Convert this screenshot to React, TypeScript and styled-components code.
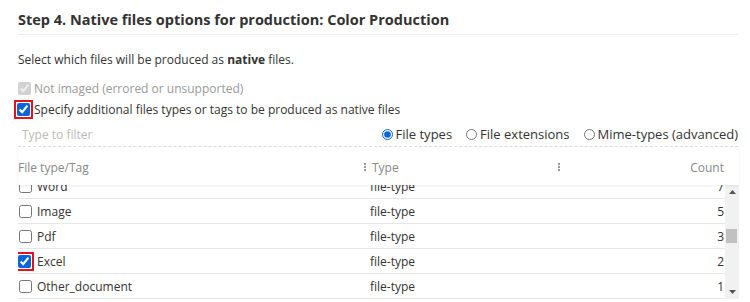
import { useLayoutEffect, useRef } from 'react';
import styled, { createGlobalStyle } from 'styled-components';

interface FileTypeRow {
  name: string;
  kind: string;
  count: number;
  checked?: boolean;
}

const rows: FileTypeRow[] = [
  { name: 'Email', kind: 'file-type', count: 14 },
  { name: 'Presentation', kind: 'file-type', count: 9 },
  { name: 'Word', kind: 'file-type', count: 7 },
  { name: 'Image', kind: 'file-type', count: 5 },
  { name: 'Pdf', kind: 'file-type', count: 3 },
  { name: 'Excel', kind: 'file-type', count: 2, checked: true },
  { name: 'Other_document', kind: 'file-type', count: 1 },
];

const ROW_HEIGHT = 25;
const SCROLL_TOP = 2 * ROW_HEIGHT + 11;

const GlobalStyle = createGlobalStyle`
  html, body {
    margin: 0;
    padding: 0;
    background: #fff;
  }
  body {
    font-family: "Open Sans", "Noto Sans", Arial, sans-serif;
    font-size: 12px;
    color: #333;
  }
`;

const Page = styled.div`
  width: 750px;
  padding: 0 12px 0 18px;
  box-sizing: border-box;
`;

const Title = styled.h2`
  margin: 0;
  padding: 10px 0 5px;
  font-size: 14.5px;
  line-height: 19px;
  font-weight: 700;
  color: #333;
  border-bottom: 1px solid #eee;
`;

const Description = styled.p`
  margin: 16px 0 0;
  line-height: 18px;
`;

const CheckLine = styled.label<{ $disabled?: boolean }>`
  display: flex;
  align-items: center;
  gap: 3px;
  height: 20px;
  color: ${p => (p.$disabled ? '#999' : '#333')};
`;

const CheckBox = styled.input.attrs({ type: 'checkbox' })`
  width: 13px;
  height: 13px;
  margin: 0;
  accent-color: #0a66d8;
  flex: none;
`;

const Marked = styled.span`
  display: inline-flex;
  border: 2px solid #e0141e;
  padding: 1px;
  margin: -3px -2px -3px -4px;
`;

const Options = styled.div`
  margin-top: 9px;
  display: flex;
  flex-direction: column;
  gap: 1px;
`;

const FilterBar = styled.div`
  display: flex;
  align-items: center;
  height: 24px;
  margin-top: 3px;
  border-bottom: 1px dashed #ddd;
`;

const FilterInput = styled.input`
  flex: 1;
  min-width: 0;
  border: none;
  outline: none;
  padding: 0 0 0 4px;
  height: 20px;
  font: inherit;
  color: #333;
  background: transparent;
  &::placeholder {
    color: #bbb;
  }
`;

const RadioGroup = styled.div`
  display: flex;
  align-items: center;
  gap: 14px;
  font-size: 13px;
`;

const RadioLabel = styled.label`
  display: flex;
  align-items: center;
  gap: 3px;
  color: #333;
`;

const Radio = styled.input.attrs({ type: 'radio' })`
  width: 11px;
  height: 11px;
  margin: 0;
  accent-color: #0a66d8;
`;

const Grid = styled.div`
  margin-right: -1px;
`;

const HeaderRow = styled.div`
  display: grid;
  grid-template-columns: 346px 194px 1fr 15px;
  align-items: center;
  height: 38px;
  box-sizing: border-box;
  padding-top: 2px;
  color: #888;
  position: relative;
  box-shadow: 0 1px 2px rgba(0, 0, 0, 0.08);
  z-index: 1;
`;

const HeaderCell = styled.div<{ $right?: boolean }>`
  display: flex;
  align-items: center;
  justify-content: ${p => (p.$right ? 'flex-end' : 'flex-start')};
  gap: 4px;
`;

const Grip = styled.span`
  display: inline-flex;
  flex-direction: column;
  gap: 1px;
  margin-right: 2px;
  & > i {
    width: 2px;
    height: 2px;
    background: #999;
  }
`;

const Spacer = styled.span`
  flex: 1;
  display: flex;
`;

const Body = styled.div`
  display: flex;
  height: 114px;
`;

const Scroller = styled.div`
  flex: 1;
  overflow-y: auto;
  scrollbar-width: none;
  &::-webkit-scrollbar {
    display: none;
  }
`;

const Row = styled.div`
  display: grid;
  grid-template-columns: 352px 188px 1fr;
  align-items: center;
  height: ${ROW_HEIGHT}px;
  box-sizing: border-box;
  border-bottom: 1px solid #e6e6e6;
`;

const NameCell = styled.label`
  display: flex;
  align-items: center;
  gap: 5px;
  padding-left: 1px;
`;

const CountCell = styled.div`
  text-align: right;
  padding-right: 1px;
`;

const ScrollTrack = styled.div`
  width: 14px;
  background: #f1f1f1;
  display: flex;
  flex-direction: column;
  align-items: center;
`;

const ScrollArrow = styled.div`
  height: 14px;
  display: flex;
  align-items: center;
  justify-content: center;
`;

const ThumbArea = styled.div`
  flex: 1;
  width: 100%;
  position: relative;
`;

const Thumb = styled.div`
  position: absolute;
  left: 1px;
  right: 2px;
  height: 14px;
  background: #c1c1c1;
`;

function Dots() {
  return (
    <Grip>
      <i />
      <i />
      <i />
    </Grip>
  );
}

export default function App() {
  const scrollRef = useRef<HTMLDivElement>(null);

  useLayoutEffect(() => {
    if (scrollRef.current) scrollRef.current.scrollTop = SCROLL_TOP;
  }, []);

  return (
    <Page>
      <GlobalStyle />
      <Title>Step 4. Native files options for production: Color Production</Title>
      <Description>
        Select which files will be produced as <b>native</b> files.
      </Description>

      <Options>
        <CheckLine $disabled>
          <CheckBox checked disabled readOnly />
          Not imaged (errored or unsupported)
        </CheckLine>
        <CheckLine>
          <Marked>
            <CheckBox defaultChecked />
          </Marked>
          Specify additional files types or tags to be produced as native files
        </CheckLine>
      </Options>

      <FilterBar>
        <FilterInput placeholder="Type to filter" />
        <RadioGroup>
          <RadioLabel>
            <Radio name="mode" defaultChecked />
            File types
          </RadioLabel>
          <RadioLabel>
            <Radio name="mode" />
            File extensions
          </RadioLabel>
          <RadioLabel>
            <Radio name="mode" />
            Mime-types (advanced)
          </RadioLabel>
        </RadioGroup>
      </FilterBar>

      <Grid>
        <HeaderRow>
          <HeaderCell>File type/Tag</HeaderCell>
          <HeaderCell>
            <Dots />
            Type
          </HeaderCell>
          <HeaderCell $right>
            <Spacer>
              <Dots />
            </Spacer>
            Count
          </HeaderCell>
          <span />
        </HeaderRow>
        <Body>
          <Scroller ref={scrollRef}>
            {rows.map(r => (
              <Row key={r.name}>
                <NameCell>
                  {r.checked ? (
                    <Marked>
                      <CheckBox defaultChecked />
                    </Marked>
                  ) : (
                    <CheckBox />
                  )}
                  {r.name}
                </NameCell>
                <div>{r.kind}</div>
                <CountCell>{r.count}</CountCell>
              </Row>
            ))}
          </Scroller>
          <ScrollTrack>
            <ScrollArrow>
              <svg width="7" height="4" viewBox="0 0 7 4">
                <path d="M3.5 0L7 4H0z" fill="#555" />
              </svg>
            </ScrollArrow>
            <ThumbArea>
              <Thumb style={{ top: `${Math.round((SCROLL_TOP / (rows.length * ROW_HEIGHT)) * 100)}%` }} />
            </ThumbArea>
            <ScrollArrow>
              <svg width="7" height="4" viewBox="0 0 7 4">
                <path d="M0 0h7L3.5 4z" fill="#555" />
              </svg>
            </ScrollArrow>
          </ScrollTrack>
        </Body>
      </Grid>
    </Page>
  );
}
